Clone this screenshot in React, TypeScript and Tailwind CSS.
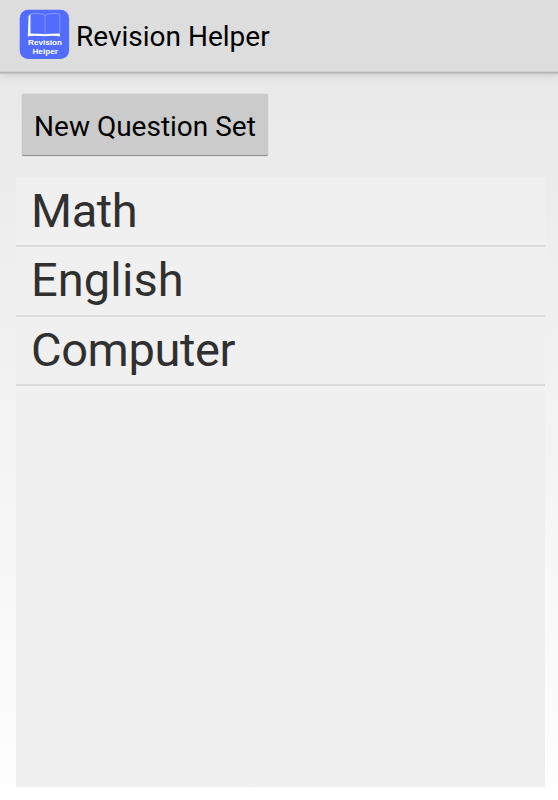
const questionSets = [
  { name: 'Math', tracking: 'tracking-[-0.4px]' },
  { name: 'English', tracking: 'tracking-[0.1px]' },
  { name: 'Computer', tracking: 'tracking-[-0.4px]' },
];

function AppIcon() {
  return (
    <svg width="51" height="51" viewBox="0 0 51 51" className="shrink-0" aria-label="Revision Helper">
      <rect x="0.7" y="0.7" width="49.4" height="49.4" rx="8.5" fill="#526cff" />
      {/* Open book */}
      <path d="M11.6 4.8 L9.6 7 L8.8 27.6 C14 26 20 27 25.5 27.2 C30 27 36 26.2 41 27.4 V24.6 L25.5 25 L11.6 24.4 Z" fill="#fff" />
      <path d="M11.6 5.2 C16 4 21.5 4 26 6.2 V25.4 C21 23.2 16 23 11.6 24.2 Z" fill="#526cff" />
      <path d="M26 6.2 C30.5 4 36 4 40.8 5.2 V24.2 C36 23 31 23.2 26 25.4 Z" fill="#526cff" />
      <path d="M11.6 24.2 V5.2 C16 4 21.5 4 26 6.2 C30.5 4 36 4 40.8 5.2 V24.4 M26 6.2 V25" fill="none" stroke="#a9b6ff" strokeWidth="0.6" />
      <g fill="#fff" fontFamily="'Liberation Sans', sans-serif" fontWeight="700" fontSize="7.8" textAnchor="middle">
        <text x="26" y="36" textLength="34" lengthAdjust="spacingAndGlyphs">Revision</text>
        <text x="26.2" y="45.4" textLength="25.5" lengthAdjust="spacingAndGlyphs">Helper</text>
      </g>
    </svg>
  );
}

export default function App() {
  return (
    <div className="flex h-[800px] w-[558px] flex-col overflow-hidden bg-linear-to-b from-[#e7e7e7] to-[#fefefe] font-['Roboto',sans-serif]">
      {/* Action bar */}
      <header className="flex h-[73px] shrink-0 items-start border-b border-[#b4b4b4] bg-[#dddddd] pt-[9px] pl-[19px] shadow-[inset_0_-1px_0_#cecece,0_1px_1px_#c4c4c4,0_2px_8px_rgba(0,0,0,0.12)]">
        <AppIcon />
        <h1 className="ml-[6px] text-[28px] leading-[55px] whitespace-nowrap text-black">Revision Helper</h1>
      </header>

      <main className="flex flex-1 flex-col pt-[21px] pr-[13px] pb-[13px] pl-4">
        <button className="ml-1.5 h-[62px] w-[246px] shrink-0 rounded-[2px] border-b border-[#8e8e8e] bg-[#cbcbcb] pt-[5px] text-[28px] whitespace-nowrap text-black shadow-[0_0_1px_rgba(0,0,0,0.35)]">
          New Question Set
        </button>

        {/* Question sets */}
        <ul className="mt-[21px] flex-1 bg-[#f0f0f0] pt-px">
          {questionSets.map(({ name, tracking }) => (
            <li key={name} className={`h-[69.3px] border-b-2 border-[#dadada] pl-[15px] text-[47px] leading-[66px] text-[#303030] ${tracking}`}>
              {name}
            </li>
          ))}
        </ul>
      </main>
    </div>
  );
}
